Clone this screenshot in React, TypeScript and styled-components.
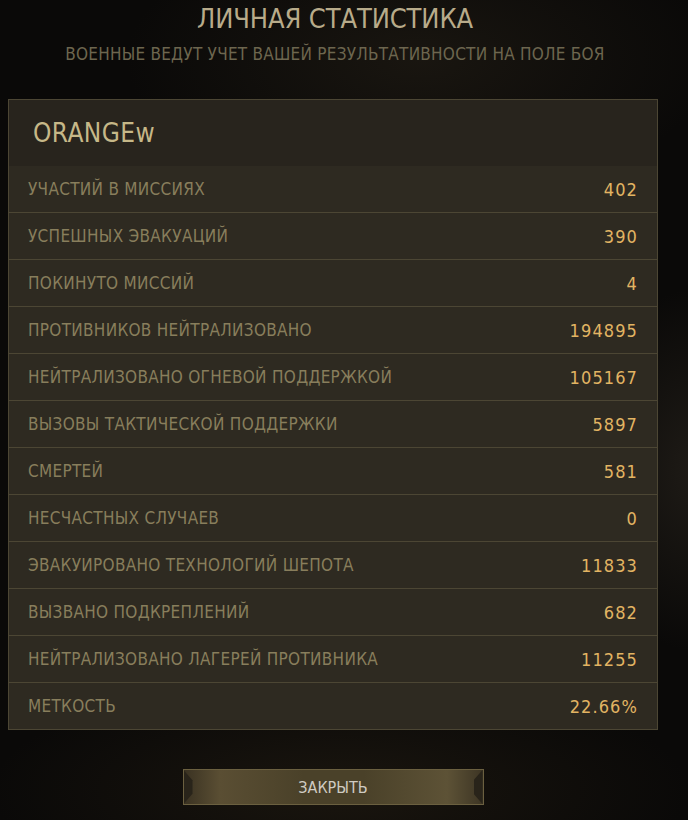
import React from "react";
import styled, { createGlobalStyle } from "styled-components";

const GlobalStyle = createGlobalStyle`
    html, body {
        margin: 0;
        padding: 0;
        background: #0a0908;
    }
    body {
        font-family: "DejaVu Sans", "Liberation Sans", sans-serif;
        font-stretch: condensed;
    }
`;

const Screen = styled.div`
    width: 688px;
    height: 820px;
    overflow: hidden;
    box-sizing: border-box;
    padding: 0 30px 0 8px;
    display: flex;
    flex-direction: column;
    background:
        radial-gradient(ellipse 180px 260px at 700px 470px, rgba(70, 62, 50, 0.35), transparent 70%),
        radial-gradient(ellipse 420px 200px at 420px 60px, rgba(40, 34, 24, 0.5), transparent 70%),
        radial-gradient(ellipse 500px 160px at 340px 790px, rgba(45, 36, 22, 0.45), transparent 70%),
        #0a0908;
`;

const Header = styled.header`
    display: flex;
    flex-direction: column;
    align-items: center;
    padding-top: 3px;
    margin-left: 2px;
    width: 650px;
`;

const Title = styled.h1`
    margin: 0;
    font-size: 27px;
    font-weight: normal;
    line-height: 32px;
    color: #b8ab8a;
    letter-spacing: -0.1px;
`;

const Subtitle = styled.p`
    margin: 9px 0 0;
    font-size: 17px;
    line-height: 20px;
    color: #6d664f;
    letter-spacing: 0.25px;
`;

const Panel = styled.section`
    margin-top: 35px;
    width: 650px;
    box-sizing: border-box;
    border: 1px solid #4c4634;
    background: #2e2a21;
`;

const NameBar = styled.div`
    height: 66px;
    display: flex;
    align-items: center;
    padding-left: 24px;
    background: #28241d;
    font-size: 26px;
    color: #c6b888;
    letter-spacing: 0.4px;
`;

const Row = styled.div<{ $last?: boolean }>`
    height: 46px;
    display: flex;
    align-items: center;
    justify-content: space-between;
    padding: 0 20px 0 19px;
    border-bottom: ${(p) => (p.$last ? "none" : "1px solid #4c4634")};
`;

const Label = styled.span`
    font-size: 17px;
    color: #887e5c;
    letter-spacing: 0.3px;
`;

const Value = styled.span`
    font-size: 18px;
    color: #e2b463;
    letter-spacing: 1.1px;
    margin-right: -1px;
`;

const Footer = styled.div`
    display: flex;
    justify-content: center;
    width: 650px;
    margin-top: 39px;
`;

const CloseButton = styled.button`
    position: relative;
    width: 301px;
    height: 36px;
    border: 1px solid #6b6040;
    padding: 0;
    cursor: pointer;
    font-family: inherit;
    font-stretch: condensed;
    font-size: 16px;
    color: #cfcbc2;
    letter-spacing: 0;
    background: linear-gradient(
        90deg,
        #3a3222 0%,
        #5a4e33 12%,
        #4a4129 40%,
        #4a4129 60%,
        #5d5236 88%,
        #3d3524 100%
    );

    &::before,
    &::after {
        content: "";
        position: absolute;
        top: 0;
        bottom: 0;
        width: 9px;
        background: #29241a;
    }
    &::before {
        left: 0;
        clip-path: polygon(0 0, 100% 30%, 100% 70%, 0 100%);
    }
    &::after {
        right: 0;
        clip-path: polygon(100% 0, 0 30%, 0 70%, 100% 100%);
    }
`;

const stats: [string, string][] = [
    ["УЧАСТИЙ В МИССИЯХ", "402"],
    ["УСПЕШНЫХ ЭВАКУАЦИЙ", "390"],
    ["ПОКИНУТО МИССИЙ", "4"],
    ["ПРОТИВНИКОВ НЕЙТРАЛИЗОВАНО", "194895"],
    ["НЕЙТРАЛИЗОВАНО ОГНЕВОЙ ПОДДЕРЖКОЙ", "105167"],
    ["ВЫЗОВЫ ТАКТИЧЕСКОЙ ПОДДЕРЖКИ", "5897"],
    ["СМЕРТЕЙ", "581"],
    ["НЕСЧАСТНЫХ СЛУЧАЕВ", "0"],
    ["ЭВАКУИРОВАНО ТЕХНОЛОГИЙ ШЕПОТА", "11833"],
    ["ВЫЗВАНО ПОДКРЕПЛЕНИЙ", "682"],
    ["НЕЙТРАЛИЗОВАНО ЛАГЕРЕЙ ПРОТИВНИКА", "11255"],
    ["МЕТКОСТЬ", "22.66%"],
];

export default function App(): JSX.Element {
    return (
        <>
            <GlobalStyle />
            <Screen>
                <Header>
                    <Title>ЛИЧНАЯ СТАТИСТИКА</Title>
                    <Subtitle>ВОЕННЫЕ ВЕДУТ УЧЕТ ВАШЕЙ РЕЗУЛЬТАТИВНОСТИ НА ПОЛЕ БОЯ</Subtitle>
                </Header>
                <Panel>
                    <NameBar>ORANGEw</NameBar>
                    {stats.map(([label, value], i) => (
                        <Row key={label} $last={i === stats.length - 1}>
                            <Label>{label}</Label>
                            <Value>{value}</Value>
                        </Row>
                    ))}
                </Panel>
                <Footer>
                    <CloseButton>ЗАКРЫТЬ</CloseButton>
                </Footer>
            </Screen>
        </>
    );
}
